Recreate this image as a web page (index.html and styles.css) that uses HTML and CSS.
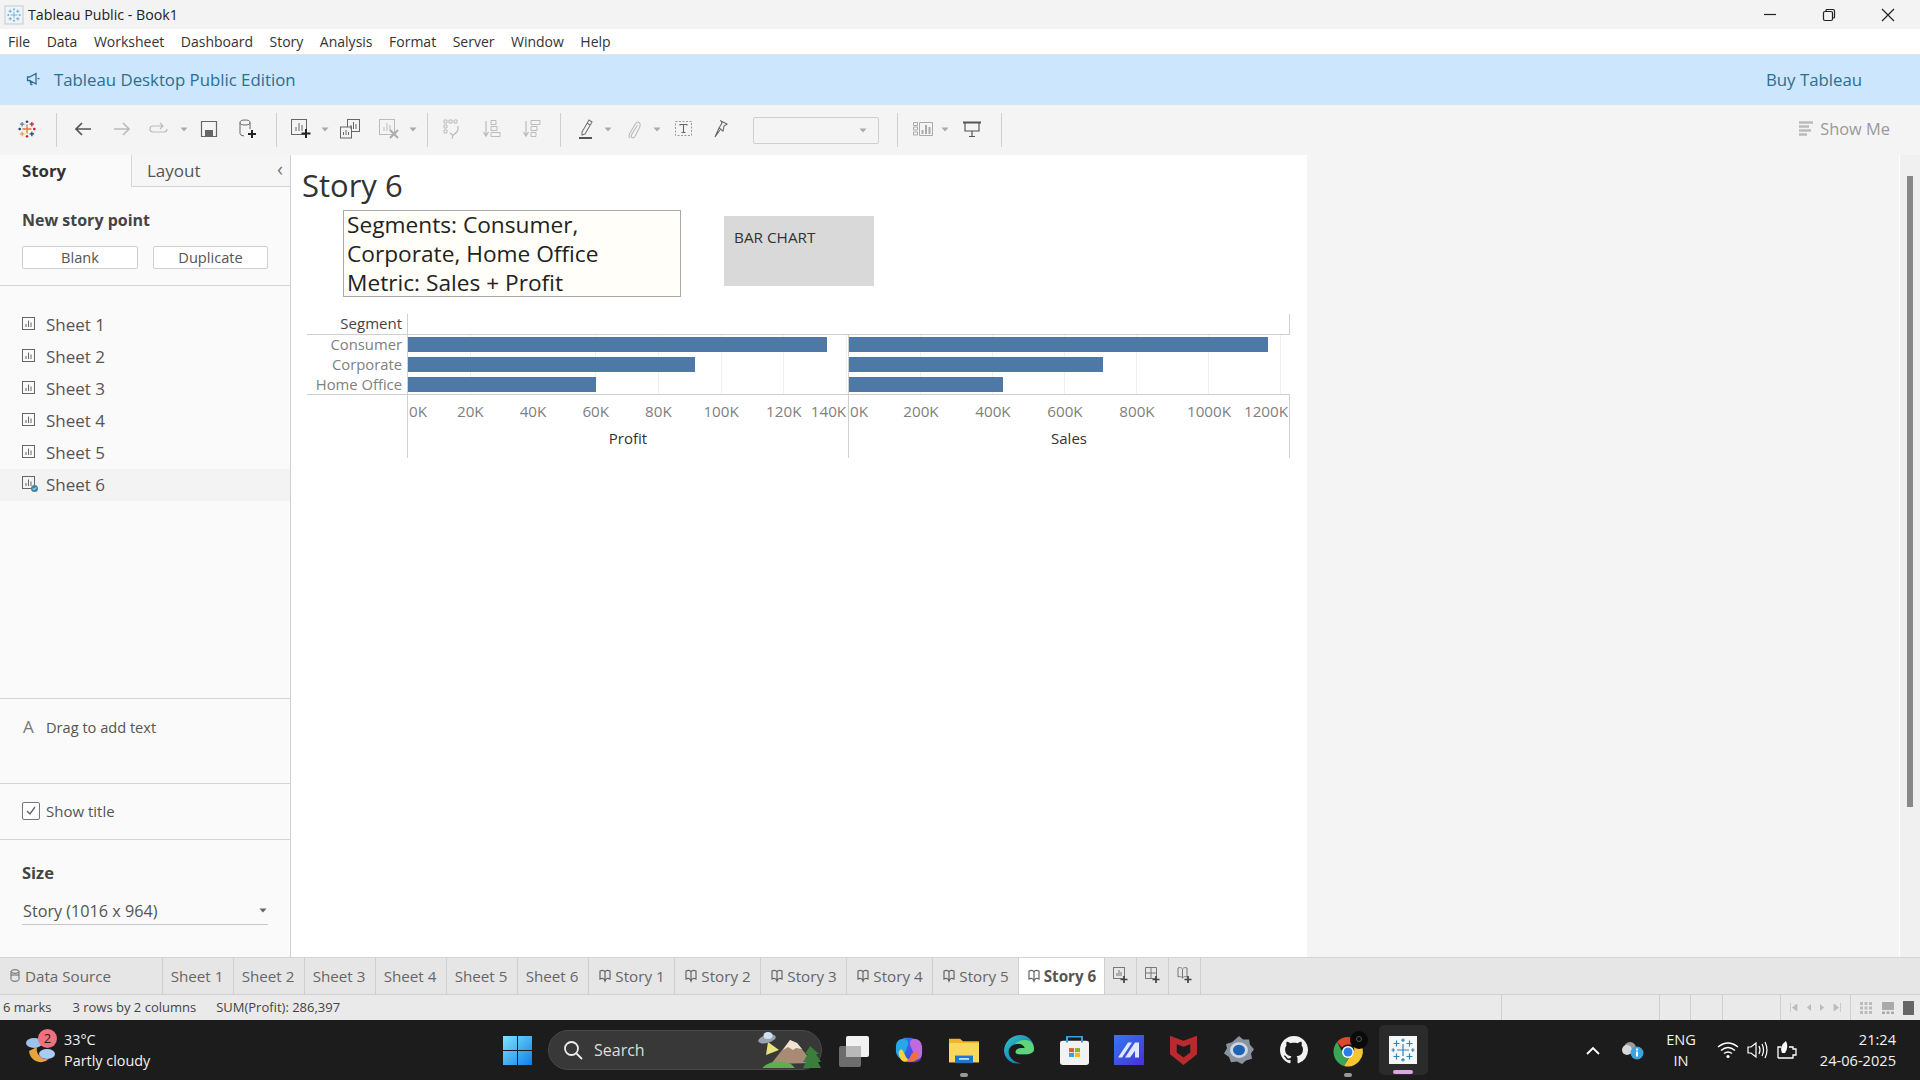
FILE: index.html
```html
<!DOCTYPE html>
<html lang="en">
<head>
<meta charset="utf-8">
<title>Tableau Public - Book1</title>
<link rel="stylesheet" href="styles.css">
</head>
<body>
<svg class="defs" width="0" height="0" aria-hidden="true">
  <symbol id="sheet" viewBox="0 0 14 14"><rect x="0.5" y="0.5" width="12" height="12" fill="none" stroke="#666"/><path d="M4 10V7M6.500 10V3.500M9 10V5.500" stroke="#666" fill="none"/></symbol>
  <symbol id="book" viewBox="0 0 14 14"><path d="M2 2c2-1 4-1 5 1 1-2 3-2 5-1v8c-2-1-4-1-5 2-1-3-3-3-5-2zM7 3v9" fill="none" stroke="#666" stroke-width="1.200"/></symbol>
  <symbol id="arrow" viewBox="0 0 8 5"><path d="M0.500 0.500h7L4 4.500z" fill="currentColor"/></symbol>
  <symbol id="cross" viewBox="0 0 24 24"><path d="M12 6v12M6 12h12M5.500 2.500v6M2.500 5.500h6M18.500 2.500v6M15.500 5.500h6M5.500 15.500v6M2.500 18.500h6M18.500 15.500v6M15.500 18.500h6M12 0.500v3.500M10.200 2.200h3.600M12 20v3.500M10.200 21.800h3.600M0.500 12h3.500M2.200 10.200v3.600M20 12h3.500M21.800 10.200v3.600" fill="none" stroke="currentColor" stroke-width="1.200"/></symbol>
  <linearGradient id="winb" x1="0" y1="0" x2="1" y2="1"><stop offset="0" stop-color="#7fe3fb"/><stop offset="1" stop-color="#0f7fe8"/></linearGradient>
  <linearGradient id="edgeb" x1="0" y1="0" x2="1" y2="1"><stop offset="0" stop-color="#31c6c4"/><stop offset="1" stop-color="#0b5fb8"/></linearGradient>
  <linearGradient id="mblue" x1="0" y1="0" x2="1" y2="1"><stop offset="0" stop-color="#2f7bf0"/><stop offset="1" stop-color="#4a2fd8"/></linearGradient>
</svg>

<header class="titlebar">
  <svg class="app-icon" width="20" height="20" viewBox="0 0 20 20"><rect x="1" y="1" width="18" height="18" fill="#eef4f8" stroke="#c9c9c9"/><use href="#cross" x="3" y="3" width="14" height="14" class="c-lblue"/></svg>
  <span class="title-text">Tableau Public - Book1</span>
  <div class="winctl">
    <svg width="14" height="14" viewBox="0 0 14 14"><path d="M1 6.500h12" stroke="#222" stroke-width="1.200"/></svg>
    <svg width="14" height="14" viewBox="0 0 14 14"><rect x="1.500" y="3.500" width="9" height="9" rx="1.500" fill="none" stroke="#222" stroke-width="1.200"/><path d="M4 3V2.500q0-1 1-1h6q1.500 0 1.500 1.500v6q0 1-1 1H11" fill="none" stroke="#222" stroke-width="1.200"/></svg>
    <svg width="14" height="14" viewBox="0 0 14 14"><path d="M1 1l12 12M13 1L1 13" stroke="#222" stroke-width="1.200"/></svg>
  </div>
</header>

<nav class="menubar">
  <span>File</span><span>Data</span><span>Worksheet</span><span>Dashboard</span><span>Story</span><span>Analysis</span><span>Format</span><span>Server</span><span>Window</span><span>Help</span>
</nav>

<div class="banner">
  <svg class="banner-icon" width="14" height="14" viewBox="0 0 14 14"><path d="M1.500 5v3.500h2L10 12V1.500L3.500 5zM4 8.500L5 12.500h1.500M11.500 6.700h2" fill="none" stroke="#2b6f90" stroke-width="1.300"/></svg>
  <span class="banner-title">Tableau Desktop Public Edition</span>
  <span class="banner-buy">Buy Tableau</span>
</div>

<div class="toolbar">
  <div class="tg tg0">
    <svg width="18" height="18" viewBox="0 0 24 24" fill="none" stroke-width="1.700"><path d="M12 6v12M6 12h12" stroke="#e8762b"/><path d="M5.500 2.500v6M2.500 5.500h6" stroke="#5b879b"/><path d="M18.500 2.500v6M15.500 5.500h6" stroke="#c72037"/><path d="M5.500 15.500v6M2.500 18.500h6" stroke="#e9a13b"/><path d="M18.500 15.500v6M15.500 18.500h6" stroke="#1f447e"/><path d="M12 0.500v3.500M10.200 2.200h3.600M0.500 12h3.500M2.200 10.200v3.600" stroke="#1f447e"/><path d="M12 20v3.500M10.200 21.800h3.600M20 12h3.500M21.800 10.200v3.600" stroke="#c72037"/></svg>
  </div>
  <i class="sep"></i>
  <div class="tg tg1">
    <svg width="20" height="18" viewBox="0 0 20 18"><path d="M18 9H3M9 3L3 9l6 6" fill="none" stroke="#555" stroke-width="1.700"/></svg>
    <svg width="20" height="18" viewBox="0 0 20 18"><path d="M2 9h15M11 3l6 6-6 6" fill="none" stroke="#bbb" stroke-width="1.700"/></svg>
    <svg width="20" height="14" viewBox="0 0 20 14"><path d="M13 4H4q-3 0-3 3t3 3h11q3 0 3-3M11 1l3 3-3 3" fill="none" stroke="#bbb" stroke-width="1.200"/></svg>
    <svg class="arr" viewBox="0 0 8 5"><use href="#arrow"/></svg>
    <svg width="18" height="18" viewBox="0 0 18 18"><path d="M1.500 1.500h15v15h-15z" fill="none" stroke="#666" stroke-width="1.200"/><rect x="5" y="10" width="8" height="6" fill="#666"/></svg>
    <svg class="nudge" width="20" height="20" viewBox="0 0 20 20"><ellipse cx="7" cy="3.500" rx="5" ry="2.500" fill="none" stroke="#666"/><path d="M2 3.500v11q0 2 4 2.500M12 3.500V10" fill="none" stroke="#666"/><path d="M14 11v8M10 15h8" stroke="#222" stroke-width="2"/></svg>
  </div>
  <i class="sep"></i>
  <div class="tg tg2">
    <svg class="nudge" width="22" height="20" viewBox="0 0 22 20"><rect x="0.500" y="0.500" width="15" height="15" fill="none" stroke="#666"/><path d="M5 12V8M8 12V4M11 12V6" stroke="#666" fill="none"/><path d="M15 10v9M10.500 14.500h9" stroke="#222" stroke-width="2"/></svg>
    <svg class="arr" viewBox="0 0 8 5"><use href="#arrow"/></svg>
    <svg width="20" height="20" viewBox="0 0 20 20"><rect x="7.500" y="0.500" width="12" height="12" fill="none" stroke="#666"/><rect x="0.500" y="8" width="11" height="11" fill="#f4f4f4" stroke="#666"/><path d="M11 10V6M13.500 10V3M16 10V5M3.500 16v-3M6 16v-5M8.500 16v-3" stroke="#666" fill="none"/></svg>
    <svg width="22" height="20" viewBox="0 0 22 20"><rect x="0.500" y="0.500" width="15" height="15" fill="none" stroke="#bbb"/><path d="M5 12V8M8 12V4M11 12V6" stroke="#bbb" fill="none"/><path d="M11 11l8 8M19 11l-8 8" stroke="#aaa" stroke-width="2"/></svg>
    <svg class="arr" viewBox="0 0 8 5"><use href="#arrow"/></svg>
  </div>
  <i class="sep"></i>
  <div class="tg tg3">
    <svg width="18" height="20" viewBox="0 0 18 20"><path d="M1 1h3v3H1zM6 1h3v3H6zM11 1h3v3h-3zM1 6h3v3H1zM1 11h3v3H1z" fill="none" stroke="#bbb"/><path d="M15 7q1 6-5 9M7 14l3 2.500-1 3" fill="none" stroke="#bbb" stroke-width="1.200"/></svg>
    <svg width="18" height="20" viewBox="0 0 18 20"><path d="M3 2v14M0.500 13L3 17l2.500-4" fill="none" stroke="#bbb" stroke-width="1.200"/><path d="M8 1.500h5v4H8zM8 7.500h6v4H8zM8 13.500h9v4H8z" fill="none" stroke="#bbb"/></svg>
    <svg width="18" height="20" viewBox="0 0 18 20"><path d="M3 2v14M0.500 13L3 17l2.500-4" fill="none" stroke="#bbb" stroke-width="1.200"/><path d="M8 1.500h9v4H8zM8 7.500h6v4H8zM8 13.500h5v4H8z" fill="none" stroke="#bbb"/></svg>
  </div>
  <i class="sep"></i>
  <div class="tg tg4">
    <svg width="16" height="22" viewBox="0 0 16 22"><path d="M4 14L11 2l3 2-7 12-3 1zM9 5l3 2" fill="none" stroke="#777" stroke-width="1.100"/><path d="M1 20h13" stroke="#555" stroke-width="2"/></svg>
    <svg class="arr" viewBox="0 0 8 5"><use href="#arrow"/></svg>
    <svg width="14" height="20" viewBox="0 0 14 20"><path d="M10.500 6L5 15q-1.500 2.500 0 3.500t3-1l4.500-9q1.500-3.500-.5-5t-4 2L3 14q-2 4 0 5" fill="none" stroke="#bbb" stroke-width="1.100"/></svg>
    <svg class="arr" viewBox="0 0 8 5"><use href="#arrow"/></svg>
    <svg width="18" height="16" viewBox="0 0 18 16"><rect x="0.500" y="0.500" width="16" height="14" fill="none" stroke="#999" stroke-dasharray="2 1.500"/><path d="M5 4.500V3.500h7v1M8.500 3.500v8M6.500 11.500h4" fill="none" stroke="#666" stroke-width="1.100"/></svg>
    <svg width="14" height="18" viewBox="0 0 14 18"><path d="M7 1l6 3-3 2-1 5-4-3 3-5zM5 8L1 17l5-7" fill="none" stroke="#666" stroke-width="1.100"/></svg>
  </div>
  <div class="combo"><svg class="arr" viewBox="0 0 8 5"><use href="#arrow"/></svg></div>
  <i class="sep"></i>
  <div class="tg tg5">
    <svg width="20" height="14" viewBox="0 0 20 14"><path d="M0.500 0.500h4v3h-4zM0.500 5h4v3h-4zM0.500 10h4v3h-4zM6.500 0.500h13v13h-13z" fill="none" stroke="#aaa"/><path d="M9.500 12V8M13 12V3M16.500 12V5" stroke="#aaa" stroke-width="2"/></svg>
    <svg class="arr" viewBox="0 0 8 5"><use href="#arrow"/></svg>
    <svg width="18" height="16" viewBox="0 0 18 16"><path d="M0 1.500h18" stroke="#555" stroke-width="2"/><path d="M2 2v8h14V2M9 10v5M6 15.500h6" fill="none" stroke="#555" stroke-width="1.200"/></svg>
  </div>
  <i class="sep"></i>
  <div class="showme">
    <svg width="14" height="15" viewBox="0 0 14 15"><path d="M0 1.500h14M0 5.500h10M0 9.500h12M0 13.500h8" stroke="#bbb" stroke-width="2.600"/></svg>
    <span>Show Me</span>
  </div>
</div>

<main class="workspace">
  <aside class="sidebar">
    <div class="side-tabs">
      <div class="side-tab active">Story</div>
      <div class="side-tab layout">Layout<span class="chev">&#8249;</span></div>
    </div>
    <section class="new-point">
      <h3>New story point</h3>
      <div class="new-btns"><button>Blank</button><button>Duplicate</button></div>
    </section>
    <ul class="sheet-list">
      <li><svg width="14" height="14"><use href="#sheet"/></svg>Sheet 1</li>
      <li><svg width="14" height="14"><use href="#sheet"/></svg>Sheet 2</li>
      <li><svg width="14" height="14"><use href="#sheet"/></svg>Sheet 3</li>
      <li><svg width="14" height="14"><use href="#sheet"/></svg>Sheet 4</li>
      <li><svg width="14" height="14"><use href="#sheet"/></svg>Sheet 5</li>
      <li class="current"><svg width="16" height="16" viewBox="0 0 16 16"><rect x="0.500" y="0.500" width="12" height="12" fill="none" stroke="#666"/><path d="M4 10V7M6.500 10V3.500M9 10V5.500" stroke="#666"/><circle cx="12.500" cy="12.500" r="3.500" fill="#3d87ab"/><path d="M11 12.500l1 1 2-2" stroke="#fff" fill="none"/></svg>Sheet 6</li>
    </ul>
    <section class="drag-text"><span class="big-a">A</span>Drag to add text</section>
    <section class="show-title"><span class="check"><svg width="12" height="10" viewBox="0 0 12 10"><path d="M2 5l3 3 5-7" fill="none" stroke="#666" stroke-width="1.400"/></svg></span>Show title</section>
    <section class="size">
      <h3>Size</h3>
      <div class="size-select">Story (1016 x 964)<svg class="arr dark" viewBox="0 0 8 5"><use href="#arrow"/></svg></div>
    </section>
  </aside>

  <div class="canvas">
    <h1 class="story-title">Story 6</h1>
    <div class="caption-row">
      <div class="caption"><div class="caption-text">Segments: Consumer,<br>Corporate, Home Office<br>Metric: Sales + Profit</div></div>
      <div class="nav-point">BAR CHART</div>
    </div>
    <div class="chart">
      <div class="seg-head">Segment</div>
      <div class="head-cell"></div>
      <div class="head-cell last"></div>
      <div class="seg-labels"><span>Consumer</span><span>Corporate</span><span>Home Office</span></div>
      <div class="pane profit">
        <div class="bar" style="width:419px"></div>
        <div class="bar" style="width:287px"></div>
        <div class="bar" style="width:188px"></div>
      </div>
      <div class="pane sales last">
        <div class="bar" style="width:419px"></div>
        <div class="bar" style="width:254px"></div>
        <div class="bar" style="width:154px"></div>
      </div>
      <div class="axis-spacer"></div>
      <div class="axis profit-axis">
        <div class="ticks"><span class="t-first">0K</span><span>20K</span><span>40K</span><span>60K</span><span>80K</span><span>100K</span><span>120K</span><span class="t-last">140K</span></div>
        <div class="axis-title">Profit</div>
      </div>
      <div class="axis sales-axis last">
        <div class="ticks"><span class="t-first">0K</span><span>200K</span><span>400K</span><span>600K</span><span>800K</span><span>1000K</span><span class="t-last">1200K</span></div>
        <div class="axis-title">Sales</div>
      </div>
    </div>
  </div>

  <div class="rightpane"></div>
  <div class="scrollbar"><div class="thumb"></div></div>
</main>

<div class="tabs">
  <div class="tab ds"><svg width="10" height="13" viewBox="0 0 10 13"><ellipse cx="5" cy="2.500" rx="4" ry="1.800" fill="none" stroke="#666"/><path d="M1 2.500v8q0 1.800 4 1.800t4-1.800v-8M1 6h8" fill="none" stroke="#666"/></svg>Data Source</div>
  <div class="tab sheet">Sheet 1</div>
  <div class="tab sheet">Sheet 2</div>
  <div class="tab sheet">Sheet 3</div>
  <div class="tab sheet">Sheet 4</div>
  <div class="tab sheet">Sheet 5</div>
  <div class="tab sheet">Sheet 6</div>
  <div class="tab story"><svg width="14" height="14"><use href="#book"/></svg>Story 1</div>
  <div class="tab story"><svg width="14" height="14"><use href="#book"/></svg>Story 2</div>
  <div class="tab story"><svg width="14" height="14"><use href="#book"/></svg>Story 3</div>
  <div class="tab story"><svg width="14" height="14"><use href="#book"/></svg>Story 4</div>
  <div class="tab story"><svg width="14" height="14"><use href="#book"/></svg>Story 5</div>
  <div class="tab story active"><svg width="14" height="14"><use href="#book"/></svg>Story 6</div>
  <div class="tab add"><svg width="16" height="18" viewBox="0 0 16 18"><rect x="0.500" y="0.500" width="11" height="11" fill="none" stroke="#777"/><path d="M4 9V6M6 9V3M8 9V5" stroke="#777"/><path d="M11 9v7M7.500 12.500h7" stroke="#444" stroke-width="1.700"/></svg></div>
  <div class="tab add"><svg width="16" height="18" viewBox="0 0 16 18"><path d="M0.500 0.500h11v11h-11zM0.500 6h11M6 0.500v11" fill="none" stroke="#777"/><path d="M11 9v7M7.500 12.500h7" stroke="#444" stroke-width="1.700"/></svg></div>
  <div class="tab add"><svg width="16" height="18" viewBox="0 0 16 18"><path d="M1 1c2-.7 3-.7 4.500 1C7 .3 8 .3 10 1v9c-2-.7-3-.7-4.500 1C4 9.300 3 9.300 1 10zM5.500 2v9" fill="none" stroke="#777"/><path d="M11 9v7M7.500 12.500h7" stroke="#444" stroke-width="1.700"/></svg></div>
</div>

<footer class="status">
  <span class="st-a">6 marks</span><span class="st-b">3 rows by 2 columns</span><span class="st-c">SUM(Profit): 286,397</span>
  <div class="st-cells">
    <i class="c158"></i><i class="c31"></i><i class="c32"></i><i class="c58"></i>
    <div class="pager">
      <svg width="8" height="9" viewBox="0 0 8 9"><path d="M0.500 0v9M7 1L2.500 4.500 7 8z" fill="#bbb" stroke="#bbb" stroke-width="0.700"/></svg>
      <svg width="6" height="9" viewBox="0 0 6 9"><path d="M5 1L1 4.500 5 8z" fill="#bbb"/></svg>
      <svg width="6" height="9" viewBox="0 0 6 9"><path d="M1 1l4 3.500L1 8z" fill="#bbb"/></svg>
      <svg width="8" height="9" viewBox="0 0 8 9"><path d="M7.500 0v9M1 1l4.500 3.500L1 8z" fill="#bbb" stroke="#bbb" stroke-width="0.700"/></svg>
    </div>
    <div class="views">
      <svg width="12" height="12" viewBox="0 0 12 12"><path d="M0 0h3v3H0zM4.500 0h3v3h-3zM9 0h3v3H9zM0 4.500h3v3H0zM4.500 4.500h3v3h-3zM9 4.500h3v3H9zM0 9h3v3H0zM4.500 9h3v3h-3zM9 9h3v3H9z" fill="#bbb"/></svg>
      <svg width="12" height="12" viewBox="0 0 12 12"><path d="M0 0h12v8H0zM0 9.500h3V12H0zM4.500 9.500h3V12h-3zM9 9.500h3V12H9z" fill="#aaa"/></svg>
      <svg width="11" height="14" viewBox="0 0 11 14"><rect width="11" height="14" fill="#666"/></svg>
    </div>
  </div>
</footer>

<footer class="taskbar">
  <div class="weather">
    <div class="weather-icon">
      <svg width="32" height="34" viewBox="0 0 32 34">
        <path d="M4 18a12 12 0 0 0 20 8A10 10 0 0 1 12 14z" fill="#e8a33c"/>
        <ellipse cx="22" cy="21" rx="8" ry="5" fill="#a9cdf0"/>
        <ellipse cx="9" cy="10" rx="8" ry="5" fill="#9cc3ec"/>
      </svg>
      <span class="badge">2</span>
    </div>
    <div class="weather-text"><span>33°C</span><span>Partly cloudy</span></div>
  </div>
  <svg class="winlogo" width="29" height="29" viewBox="0 0 29 29"><path d="M0 0h14v14H0zM15 0h14v14H15zM0 15h14v14H0zM15 15h14v14H15z" fill="url(#winb)"/></svg>
  <div class="search">
    <svg width="20" height="20" viewBox="0 0 20 20"><circle cx="8.500" cy="8.500" r="6.500" fill="none" stroke="#eee" stroke-width="1.800"/><path d="M13.500 13.500L19 19" stroke="#eee" stroke-width="1.800"/></svg>
    <span>Search</span>
    <svg class="search-art" width="62" height="38" viewBox="0 0 62 38">
      <path d="M10 11L8 24l13-5z" fill="#e7e37a"/>
      <ellipse cx="9" cy="8" rx="9" ry="4" fill="#9aa3b0" transform="rotate(-15 9 8)"/><ellipse cx="10" cy="4.500" rx="4.500" ry="3.500" fill="#cfe0ee"/>
      <path d="M13 33L32 9l7 3 16 20z" fill="#a98a74"/><path d="M32 9l7 3 5 6-6-1-3 2-5-3-5 3z" fill="#efe3d6"/>
      <path d="M5 36q12-9 28-3l4 4H5z" fill="#5fae4c"/>
      <path d="M52 15l-5 8h3l-5 8h3l-3 6h18l-3-6h3l-5-8h3z" fill="#3b7d3d"/>
    </svg>
  </div>
  <div class="apps">
    <div class="app">
      <svg width="30" height="34" viewBox="0 0 30 34"><rect x="0" y="13" width="22" height="21" rx="2" fill="#6d6d6d"/><rect x="7" y="3" width="23" height="21" rx="2" fill="#f2f2f2"/><rect x="7" y="13" width="15" height="11" fill="#b9b9b9"/></svg>
    </div>
    <div class="app">
      <svg width="28" height="28" viewBox="0 0 30 32" preserveAspectRatio="none"><path d="M9 2h8q3 0 4 3l7 17q1 7-6 8h-8q-3 0-4-3z" fill="url(#mblue)"/><path d="M20 3q8 0 9 9v8q0 6-6 7L16 10q-1-6 4-7z" fill="#c06ae0"/><path d="M9 3Q2 3 1 11v7q1 7 7 8L14 10q1-6-5-7z" fill="#2aa5e8"/><path d="M4 18q3-6 5 0t6 10q-3 2-6 1-5-2-5-11z" fill="#f3d53f"/><path d="M18 20q4-4 7 0 1 7-5 9-4 1-8 0 4-3 6-9z" fill="#f26f3f"/></svg>
    </div>
    <div class="app">
      <svg width="30" height="27" viewBox="0 0 30 32" preserveAspectRatio="none"><path d="M0 2h11l3 3h16v25H0z" fill="#f0b429"/><path d="M0 7h30v23H0z" fill="#f9d65c"/><path d="M6 22h18v9H6z" fill="#1a78d0"/><path d="M10 25h10v2H10z" fill="#cfe6fb"/></svg>
      <i class="run"></i>
    </div>
    <div class="app">
      <svg width="30" height="30" viewBox="0 0 30 36" preserveAspectRatio="none"><path d="M0 18C1 6 9 0 16 0c8 0 14 7 14 17 0 4-4 6-8 6H15c-3 0-4-2-3-4 1-3 5-4 9-3-1-4-5-7-10-5C5 13 3 20 6 26c2 4 6 7 11 8-9 2-17-5-17-16z" fill="url(#edgeb)"/><path d="M30 17c0 4-4 6-8 6H15c-3 0-4-2-3-4 1-3 5-4 9-3-1-4-5-7-10-5 3-6 19-9 19 6z" fill="#60d47a"/></svg>
    </div>
    <div class="app">
      <svg width="29" height="29" viewBox="0 0 29 36" preserveAspectRatio="none"><rect x="0" y="6" width="29" height="30" rx="3" fill="#f2f2f2"/><path d="M7 8V1h15v7" fill="none" stroke="#2ea3dd" stroke-width="2"/><path d="M9 15h5v5H9z" fill="#e95a2b"/><path d="M15 15h5v5h-5z" fill="#7eba28"/><path d="M9 21h5v5H9z" fill="#2ea3dd"/><path d="M15 21h5v5h-5z" fill="#f5b90f"/></svg>
    </div>
    <div class="app">
      <svg width="30" height="30" viewBox="0 0 30 36" preserveAspectRatio="none"><rect width="30" height="36" fill="url(#mblue)"/><path d="M4 27L14 9h4L8 27zM11 27L21 9h4v18h-4v-8l-5 8z" fill="#dfe8ff"/></svg>
    </div>
    <div class="app">
      <svg width="27" height="30" viewBox="0 0 28 36" preserveAspectRatio="none"><path d="M0 1l14 6 14-6v22L14 36 0 23z" fill="#b92a2d"/><path d="M7 11l7 3 7-3v10l-7 6-7-6z" fill="#1c1c1c"/></svg>
    </div>
    <div class="app">
      <svg width="30" height="28" viewBox="0 0 30 32" preserveAspectRatio="none"><path d="M15 0l4 4h6l1 6 4 5-3 5 1 6-6 2-4 4-5-3-6 1-2-6-5-4 3-6-1-5 6-2z" fill="#8a949e"/><circle cx="15" cy="16" r="9" fill="#cfd6dd"/><circle cx="15" cy="16" r="6" fill="#1c63b5"/></svg>
    </div>
    <div class="app">
      <svg width="28" height="28" viewBox="0 0 16 16"><path fill="#f2f2f2" d="M8 0C3.580 0 0 3.580 0 8c0 3.540 2.290 6.530 5.470 7.590.4.070.55-.17.55-.38 0-.19-.01-.82-.01-1.490-2.010.37-2.530-.49-2.690-.94-.09-.23-.48-.94-.82-1.130-.28-.15-.68-.52-.01-.53.63-.01 1.080.58 1.230.82.720 1.210 1.870.87 2.330.66.070-.52.28-.87.51-1.070-1.780-.2-3.640-.89-3.640-3.950 0-.87.31-1.590.82-2.150-.08-.2-.36-1.020.08-2.120 0 0 .67-.21 2.200.82.64-.18 1.320-.27 2-.27.68 0 1.360.09 2 .27 1.530-1.040 2.200-.82 2.200-.82.44 1.100.16 1.920.08 2.120.51.56.82 1.270.82 2.150 0 3.070-1.870 3.750-3.650 3.950.29.25.54.73.54 1.480 0 1.070-.01 1.930-.01 2.200 0 .21.15.46.55.38A8.013 8.013 0 0016 8c0-4.420-3.580-8-8-8z"/></svg>
    </div>
    <div class="app">
      <svg width="36" height="38" viewBox="-3 0 36 38"><path d="M15 6a15 15 0 0 1 13 7.500H15q-4 0-6 3L4 11A15 15 0 0 1 15 6z" fill="#e2462f"/><path d="M4 11l6 11q2 4 6 4l-5 9A15 15 0 0 1 4 11z" fill="#3aa655"/><path d="M28 13.500A15 15 0 0 1 11 35l6-10q3 0 4-3 1-4-1-8.500z" fill="#f7c52d"/><circle cx="15" cy="21" r="6" fill="#fff"/><circle cx="15" cy="21" r="4.500" fill="#2d7de8"/><circle cx="26" cy="9" r="9" fill="#0a0a0a"/><circle cx="26" cy="8" r="2.500" fill="none" stroke="#555"/></svg>
      <i class="run"></i>
    </div>
    <div class="app current">
      <svg class="tableau-tile" width="28" height="28" viewBox="0 0 28 28"><rect width="28" height="28" fill="#f4f6f8"/><use href="#cross" x="2" y="2" width="24" height="24" class="c-blue"/></svg>
      <i class="run pink"></i>
    </div>
  </div>
  <div class="tray">
    <svg width="14" height="9" viewBox="0 0 14 9"><path d="M1 8l6-6 6 6" fill="none" stroke="#fff" stroke-width="1.800"/></svg>
    <svg width="22" height="22" viewBox="0 0 22 22"><circle cx="8" cy="9" r="6" fill="#9a9a9a"/><circle cx="5" cy="11" r="5" fill="#d8d8d8"/><circle cx="15" cy="14" r="6.500" fill="#3aa3e0"/><rect x="14" y="12.500" width="2" height="5" fill="#fff"/><rect x="14" y="9.500" width="2" height="2" fill="#fff"/></svg>
    <div class="lang"><span>ENG</span><span>IN</span></div>
    <svg width="22" height="18" viewBox="0 0 22 18"><path d="M1 6q10-8 20 0M4 9.500q7-6 14 0M7 12.500q4-3 8 0" fill="none" stroke="#fff" stroke-width="1.400"/><circle cx="11" cy="15.500" r="1.600" fill="#fff"/></svg>
    <svg width="21" height="20" viewBox="0 0 21 20"><path d="M1 7h3l5-4v14l-5-4H1z" fill="none" stroke="#fff" stroke-width="1.200"/><path d="M12 6q2 4 0 8M15 4q3 6 0 12M18 2q4 8 0 16" fill="none" stroke="#fff" stroke-width="1.200"/></svg>
    <svg width="22" height="20" viewBox="0 0 22 20"><path d="M2 18h15v-3h3V9h-3V7h-4" fill="none" stroke="#fff" stroke-width="1.300"/><path d="M2 18V7h3" fill="none" stroke="#fff" stroke-width="1.300"/><path d="M6 13Q3 6 10 1q3 6-1 12z" fill="#fff"/></svg>
    <div class="clock"><span>21:24</span><span>24-06-2025</span></div>
  </div>
</footer>
</body>
</html>
```

FILE: styles.css
```css
* { box-sizing: border-box; }
html, body { margin: 0; padding: 0; width: 1920px; height: 1080px; overflow: hidden; }
body { font-family: "Open Sans", "Liberation Sans", sans-serif; color: #555; background: #f4f4f4; display: flex; flex-direction: column; }
.defs { position: absolute; }
svg { display: block; flex: none; overflow: visible; }
h1, h3, ul { margin: 0; padding: 0; font: inherit; }
i { font-style: normal; display: block; }
.c-lblue { color: #4b9cc9; }
.c-blue { color: #2f86b8; }

/* window chrome */
.titlebar { height: 29px; background: #f3f3f3; display: flex; align-items: center; padding-left: 4px; color: #222; font-size: 14.200px; }
.title-text { margin-left: 4px; }
.winctl { margin-left: auto; display: grid; grid-template-columns: 58px 59px 60px; justify-items: center; width: 177px; margin-right: 2px; }
.menubar { height: 26px; background: #fff; border-bottom: 1px solid #e4e4e4; display: flex; align-items: center; padding-left: 8px; gap: 16.500px; font-size: 14px; color: #333; }
.banner { height: 50px; background: #cce6fe; display: flex; align-items: center; padding: 0 0 2px 26px; color: #2a6f90; font-size: 16.800px; }
.banner-title { margin-left: 14px; }
.banner-buy { margin-left: auto; margin-right: 58px; }

/* toolbar */
.toolbar { height: 50px; background: #f4f4f4; display: flex; align-items: center; }
.sep { width: 1px; height: 34px; background: #cfcfcf; }
.tg { display: grid; align-items: center; justify-items: center; height: 34px; padding-bottom: 2px; }
.tg0 { width: 56px; grid-template-columns: 54px; }
.tg1 { width: 219px; padding-left: 3px; grid-template-columns: 46px 32px 42px 8px 42px 34px; }
.tg2 { width: 150px; padding-left: 4px; grid-template-columns: 40px 8px 42px 38px 8px; }
.tg3 { width: 132px; padding-left: 4px; grid-template-columns: 40px 40px 40px; }
.tg4 { width: 173px; padding-left: 9px; grid-template-columns: 32px 12px 40px 6px 48px 26px; }
.tg5 { width: 103px; padding-left: 5px; grid-template-columns: 40px 4px 50px; }
.nudge { margin-left: 2px; }
.arr { width: 8px; height: 5px; color: #aaa; }
.combo { width: 126px; height: 27px; margin: 0 18px 0 19px; border: 1px solid #cfcfcf; border-radius: 2px; display: flex; align-items: center; justify-content: flex-end; padding-right: 11px; }
.showme { margin-left: auto; margin-right: 30px; padding-bottom: 3px; display: flex; align-items: center; gap: 7px; color: #999; font-size: 16.400px; }

/* workspace */
.workspace { height: 803px; display: flex; border-bottom: 1px solid #d4d4d4; background: #f4f4f4; }
.sidebar { width: 291px; background: #fafafa; border-right: 1px solid #d0d0d0; display: flex; flex-direction: column; flex: none; }
.side-tabs { height: 32px; display: flex; flex: none; }
.side-tab { display: flex; align-items: center; font-size: 17px; }
.side-tab.active { width: 131px; padding: 0 0 2px 22px; font-weight: 700; color: #333; font-size: 16.800px; }
.side-tab.layout { flex: 1; padding-left: 15px; border-left: 1px solid #d4d4d4; border-bottom: 1px solid #d4d4d4; background: #f6f6f6; position: relative; }
.chev { margin-left: auto; margin-right: 7px; color: #777; font-size: 20px; line-height: 1; padding-bottom: 3px; }
.new-point { height: 99px; padding: 22px 22px 0; border-bottom: 1px solid #d4d4d4; flex: none; }
.new-point h3 { font-size: 16px; font-weight: 700; line-height: 22px; color: #444; }
.new-btns { display: grid; grid-template-columns: 116px 115px; gap: 15px; margin-top: 15px; }
.new-btns button { height: 23px; padding: 0 0 2px; font: inherit; font-size: 14.600px; color: #555; background: #fff; border: 1px solid #d0d0d0; border-radius: 2px; }
.sheet-list { list-style: none; flex: 1; padding-top: 23px; font-size: 17px; }
.sheet-list li { height: 32px; display: flex; align-items: center; padding: 0 0 2px 22px; }
.sheet-list li svg { margin-right: 10px; }
.sheet-list li.current { background: #f3f3f3; }
.sheet-list li.current svg { margin-right: 8px; }
.drag-text { height: 85px; border-top: 1px solid #d4d4d4; padding: 18px 0 0 23px; display: flex; align-items: flex-start; font-size: 14.600px; line-height: 20px; flex: none; }
.big-a { width: 23px; font-size: 17px; color: #777; }
.show-title { height: 56px; border-top: 1px solid #d4d4d4; padding: 0 0 1px 22px; display: flex; align-items: center; font-size: 15px; flex: none; }
.check { width: 18px; height: 18px; margin-right: 6px; border: 1px solid #777; border-radius: 2px; background: #fff; display: flex; align-items: center; justify-content: center; }
.size { height: 118px; border-top: 1px solid #d4d4d4; padding: 24px 22px 0; flex: none; }
.size h3 { font-size: 16.500px; font-weight: 700; line-height: 18px; color: #444; }
.size-select { margin-top: 17px; height: 26px; border-bottom: 1px solid #c8c8c8; display: flex; align-items: center; justify-content: space-between; padding: 0 1px 2px; font-size: 16.200px; }
.arr.dark { color: #666; }

/* story canvas */
.canvas { width: 1016px; flex: none; background: #fff; padding-top: 9px; }
.story-title { height: 46px; padding-left: 11px; font-size: 31px; line-height: 42px; color: #333; }
.caption-row { display: flex; align-items: flex-start; padding-left: 52px; }
.caption { width: 338px; height: 87px; padding: 0 3px; background: #fffef8; border: 1px solid #aaa; color: #222; font-size: 22.700px; line-height: 29px; white-space: nowrap; }
.caption-text { margin-top: -1px; }
.nav-point { width: 150px; height: 70px; margin: 6px 0 0 43px; padding: 10px 10px 0; background: #d9d9d9; color: #333; font-size: 15.300px; line-height: 22px; }

/* chart */
.chart { margin: 17px 0 0 16px; width: 983px; display: grid; grid-template-columns: 100px 441px 442px; grid-template-rows: 20px 61px 63px; font-size: 15.200px; color: #808080; }
.seg-head { text-align: right; padding-right: 5px; line-height: 18px; color: #444; font-weight: 500; font-size: 15px; }
.head-cell:not(.last) { border-left: 1px solid #d0d0d0; }
.head-cell.last, .axis.last { border-right: 1px solid #d0d0d0; }
.seg-labels { border-top: 1px solid #d0d0d0; border-bottom: 1px solid #d0d0d0; padding: 0 5px 0 0; display: grid; grid-template-rows: 20px 20px 19px; text-align: right; line-height: 18px; white-space: nowrap; font-size: 14.800px; }
.pane { border-top: 1px solid #d0d0d0; border-bottom: 1px solid #d0d0d0; border-left: 1px solid #d0d0d0; padding: 2px 0 0; display: flex; flex-direction: column; gap: 5px; }
.profit { background: repeating-linear-gradient(90deg, transparent 0 61.800px, #efefef 61.800px 62.700px); }
.sales { background: repeating-linear-gradient(90deg, transparent 0 71.100px, #efefef 71.100px 72px); }
.bar { height: 15px; background: #4e78a6; }
.axis { border-left: 1px solid #d0d0d0; }
.ticks { height: 31px; display: grid; align-items: center; justify-items: center; white-space: nowrap; }
.profit-axis .ticks { grid-template-columns: 31px repeat(6, 62.700px) 32px; }
.sales-axis .ticks { grid-template-columns: 36px repeat(5, 72px) 44px; }
.t-first { justify-self: start; margin-left: 1px; }
.t-last { justify-self: end; margin-right: 1px; }
.axis-title { text-align: center; color: #333; font-weight: 500; font-size: 15px; line-height: 25px; }

.rightpane { flex: 1; background: #f4f4f4; border-right: 1px solid #fff; }
.scrollbar { width: 20px; flex: none; background: #f0f0f0; padding: 21px 6px 0 7px; }
.thumb { width: 6px; height: 631px; background: #888; }

/* sheet tabs */
.tabs { height: 37px; background: #e6e6e6; border-bottom: 1px solid #d0d0d0; display: flex; font-size: 15.200px; color: #666; }
.tab { display: flex; align-items: center; justify-content: center; border-right: 1px solid #cfcfcf; white-space: nowrap; padding-bottom: 1px; }
.tab.ds { width: 163px; justify-content: flex-start; padding-left: 10px; gap: 5px; }
.tab.sheet { width: 71px; padding-right: 2px; }
.tab.story { width: 86px; gap: 3px; }
.tab.add { width: 32px; padding-left: 1px; }
.tab.active { background: #fff; font-weight: 700; color: #555; }

/* status bar */
.status { height: 25px; background: #eaeaea; display: flex; align-items: center; font-size: 13px; color: #444; padding-left: 3px; }
.st-a, .st-b, .st-c { padding-bottom: 2px; }
.st-b { margin-left: 21px; }
.st-c { margin-left: 20px; }
.st-cells { margin-left: auto; height: 25px; display: flex; }
.st-cells > i, .pager, .views { height: 25px; border-left: 1px solid #cfcfcf; }
.c158 { width: 158px; }
.c31 { width: 31px; }
.c32 { width: 32px; }
.c58 { width: 58px; }
.pager { width: 70px; display: flex; align-items: center; justify-content: space-around; padding: 0 5px; }
.views { width: 70px; display: flex; align-items: center; justify-content: space-between; padding: 0 6px 0 9px; }

/* windows taskbar */
.taskbar { height: 60px; background: #1c1c1c; display: flex; align-items: center; color: #f2f2f2; }
.weather { width: 503px; padding-left: 25px; display: flex; align-items: center; flex: none; }
.weather-icon { position: relative; width: 39px; }
.badge { position: absolute; left: 13px; top: -4px; width: 19px; height: 19px; border-radius: 50%; background: #f1707e; color: #1c1c1c; font-size: 13px; line-height: 19px; text-align: center; }
.weather-text { display: flex; flex-direction: column; font-size: 14.400px; line-height: 21px; }
.winlogo { margin-right: 16px; }
.search { width: 274px; height: 40px; margin-right: 5px; border-radius: 20px; border: 1px solid #4a4a4a; background: #383838; display: flex; align-items: center; padding-left: 14px; font-size: 16px; color: #ddd; position: relative; flex: none; }
.search span { margin-left: 11px; }
.search-art { margin-left: auto; margin-right: 1px; }
.apps { display: grid; grid-template-columns: repeat(11, 54.900px); height: 60px; flex: none; }
.app { display: flex; align-items: center; justify-content: center; position: relative; }
.app.current { margin: 5px 3px; background: #2b2b2b; border-radius: 5px; }
.run { position: absolute; left: 50%; bottom: 3px; width: 8px; height: 4px; margin-left: -4px; border-radius: 2px; background: #999; }
.run.pink { width: 20px; margin-left: -10px; bottom: 1px; background: #dca6e6; }
.tray { margin-left: auto; display: grid; grid-template-columns: 40px 40px 56px 38px 21px 38px 90px; justify-items: center; align-items: center; margin-right: 24px; flex: none; }
.lang, .clock { display: flex; flex-direction: column; align-items: center; font-size: 14.600px; line-height: 21px; }
.clock { justify-self: end; align-items: flex-end; }
```
